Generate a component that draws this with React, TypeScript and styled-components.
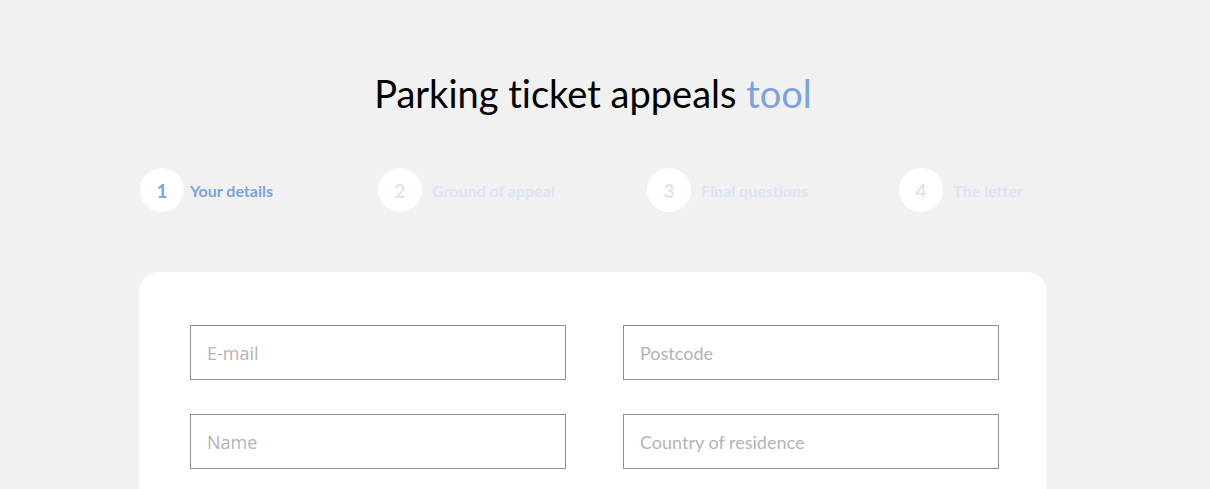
import React from 'react';
import styled, { createGlobalStyle } from 'styled-components';

const GlobalStyle = createGlobalStyle`
  html, body {
    margin: 0;
    padding: 0;
    background: #f1f1f1;
    font-family: Lato, "Open Sans", sans-serif;
    font-variant-ligatures: none;
    overflow: hidden;
  }
`;

const colors = {
  blue: '#7aa3e0',
  faded: '#dce5f5',
  border: '#8f8f8f',
  placeholder: '#b3b3b3',
};

const Page = styled.div`
  width: 908px;
  margin-left: 139px;
  display: flex;
  flex-direction: column;
`;

const Title = styled.h1`
  margin: 69px 0 0;
  font-family: Lato, sans-serif;
  font-weight: 400;
  font-size: 38px;
  line-height: 48px;
  color: #000;
  text-align: center;
  font-variant-ligatures: none;
`;

const Accent = styled.span`
  color: ${colors.blue};
`;

const Steps = styled.div`
  display: grid;
  grid-template-columns: 238px 269px 252px auto;
  padding-left: 1px;
  margin-top: 51px;
  height: 44px;
`;

const Step = styled.div<{ $active?: boolean }>`
  display: flex;
  align-items: center;
  gap: ${({ $active }) => ($active ? '6px' : '10px')};
`;

const Circle = styled.div<{ $active?: boolean }>`
  width: 44px;
  height: 44px;
  border-radius: 50%;
  background: #fff;
  display: flex;
  align-items: center;
  justify-content: center;
  font-family: Lato, sans-serif;
  font-size: 19px;
  font-weight: 700;
  color: ${({ $active }) => ($active ? colors.blue : colors.faded)};
`;

const StepLabel = styled.span<{ $active?: boolean }>`
  font-family: Lato, sans-serif;
  font-size: 16px;
  font-weight: 700;
  color: ${({ $active }) => ($active ? colors.blue : colors.faded)};
`;

const Card = styled.div`
  margin-top: 60px;
  background: #fff;
  border-radius: 20px 20px 0 0;
  padding: 53px 48px 60px 51px;
  display: grid;
  grid-template-columns: 376px 376px;
  column-gap: 57px;
  row-gap: 34px;
`;

const Input = styled.input<{ $alt?: boolean }>`
  box-sizing: border-box;
  width: 376px;
  height: 55px;
  border: 1px solid ${colors.border};
  border-radius: 0;
  padding: 0 16px;
  font-size: 18px;
  font-family: ${({ $alt }) => ($alt ? '"Open Sans", sans-serif' : 'Lato, sans-serif')};
  color: #333;
  background: #fff;
  outline: none;

  &::placeholder {
    color: ${colors.placeholder};
  }
`;

const steps = ['Your details', 'Ground of appeal', 'Final questions', 'The letter'];

const App: React.FC = () => (
  <>
    <GlobalStyle />
    <Page>
      <Title>
        Parking ticket appeals <Accent>tool</Accent>
      </Title>
      <Steps>
        {steps.map((label, i) => (
          <Step key={label} $active={i === 0}>
            <Circle $active={i === 0}>{i + 1}</Circle>
            <StepLabel $active={i === 0}>{label}</StepLabel>
          </Step>
        ))}
      </Steps>
      <Card>
        <Input $alt placeholder="E-mail" />
        <Input placeholder="Postcode" />
        <Input $alt placeholder="Name" />
        <Input placeholder="Country of residence" />
      </Card>
    </Page>
  </>
);

export default App;
